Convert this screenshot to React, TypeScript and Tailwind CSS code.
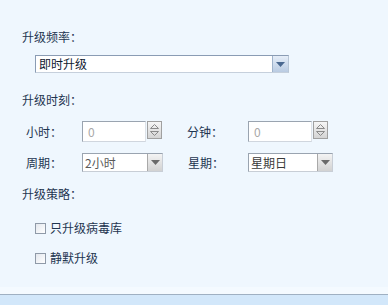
import React from "react";

const font = { fontFamily: '"Noto Sans CJK SC", "Noto Sans", sans-serif' };

function DropArrow({ blue }: { blue?: boolean }) {
  return (
    <div
      className={
        blue
          ? "w-[16px] h-full flex items-center justify-center border-l border-[#9fb3cb] bg-gradient-to-b from-[#e6eef8] to-[#b9cbe2]"
          : "w-[15px] h-full flex items-center justify-center border-l border-[#a9a9a9] bg-gradient-to-b from-[#f4f4f4] to-[#d2d2d2]"
      }
    >
      <svg width="9" height="5" viewBox="0 0 9 5">
        <path d="M0 0 L9 0 L4.5 5 Z" fill={blue ? "#4a6890" : "#6a6a6a"} />
      </svg>
    </div>
  );
}

function Spinner() {
  return (
    <div className="w-[15px] h-[18px] ml-[1px] self-start flex flex-col items-center justify-center gap-[2px] border border-[#a0a0a0] bg-gradient-to-b from-[#f6f6f6] to-[#d4d4d4]">
      <svg width="9" height="5" viewBox="0 0 9 5">
        <path d="M0.5 4.5 L4.5 0.5 L8.5 4.5 Z" fill="none" stroke="#8a8a8a" strokeWidth="1" />
      </svg>
      <svg width="9" height="5" viewBox="0 0 9 5">
        <path d="M0.5 0.5 L4.5 4.5 L8.5 0.5 Z" fill="none" stroke="#8a8a8a" strokeWidth="1" />
      </svg>
    </div>
  );
}

function NumberInput() {
  return (
    <div className="flex items-start">
      <div className="w-[64px] h-[21px] bg-white border border-t-[#9aa4b0] border-l-[#9aa4b0] border-r-[#dde2e8] border-b-[#d0d6de] flex items-center pl-[5px] text-[12px] text-[#a8a8a8]">
        0
      </div>
      <Spinner />
    </div>
  );
}

function Select({ text, width, color }: { text: string; width: string; color: string }) {
  return (
    <div
      className={`${width} h-[19px] bg-white border border-t-[#9aa4b0] border-l-[#9aa4b0] border-r-[#c8ced6] border-b-[#c8ced6] flex items-center`}
    >
      <div className={`flex-1 pl-[2px] text-[12px] leading-none ${color}`}>{text}</div>
      <DropArrow />
    </div>
  );
}

function Check({ label }: { label: string }) {
  return (
    <div className="flex items-center h-[16px]">
      <div className="w-[11px] h-[11px] border border-[#8f9aa8] bg-gradient-to-br from-[#e4e8ee] to-[#ffffff]" />
      <span className="ml-[4px] text-[12px] text-[#1e3550]">{label}</span>
    </div>
  );
}

export default function App() {
  return (
    <div className="w-[388px] h-[305px] bg-[#eff7fe] flex flex-col overflow-hidden" style={font}>
      <div className="flex-1 flex flex-col pl-[22px]">
        <div className="mt-[29px] h-[16px] leading-[16px] text-[12px] text-[#1e3550]">升级频率：</div>
        <div className="mt-[10px] ml-[13px] w-[254px] h-[18px] bg-white border border-t-[#8a9cb4] border-l-[#8a9cb4] border-r-[#b8c6d6] border-b-[#c6d0dc] flex items-center">
          <div className="flex-1 pl-[3px] text-[12px] leading-none text-[#10202f]">即时升级</div>
          <DropArrow blue />
        </div>
        <div className="mt-[19px] h-[16px] leading-[16px] text-[12px] text-[#1e3550]">升级时刻：</div>
        <div className="mt-[13px] flex items-start">
          <div className="w-[60px] pl-[4px] h-[21px] flex items-center text-[12px] text-[#1e3550]">小时：</div>
          <NumberInput />
          <div className="w-[86px] pl-[25px] h-[21px] flex items-center text-[12px] text-[#1e3550] whitespace-nowrap">分钟：</div>
          <NumberInput />
        </div>
        <div className="mt-[11px] flex items-start">
          <div className="w-[60px] pl-[4px] h-[19px] flex items-center text-[12px] text-[#1e3550]">周期：</div>
          <Select text="2小时" width="w-[81px]" color="text-[#5a5a5a]" />
          <div className="w-[85px] pl-[25px] h-[19px] flex items-center text-[12px] text-[#1e3550] whitespace-nowrap">星期：</div>
          <Select text="星期日" width="w-[85px]" color="text-[#3a3a3a]" />
        </div>
        <div className="mt-[14px] h-[16px] leading-[16px] text-[12px] text-[#1e3550]">升级策略：</div>
        <div className="mt-[18px] ml-[13px] flex flex-col gap-[14px]">
          <Check label="只升级病毒库" />
          <Check label="静默升级" />
        </div>
      </div>
      <div className="h-[7px] bg-[#f4faff]" />
      <div className="h-[1px] bg-[#9fb0c2]" />
      <div className="h-[10px] bg-[#d2e7fa]" />
    </div>
  );
}
